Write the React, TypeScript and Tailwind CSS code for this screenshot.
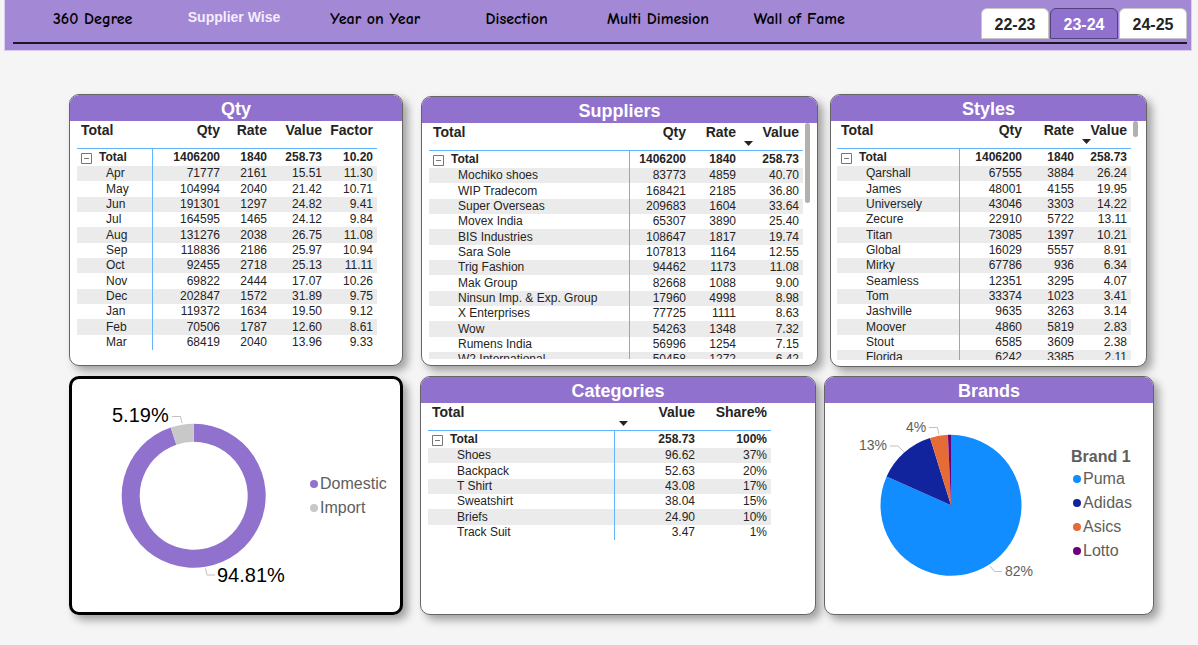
import { useState, type ReactNode } from "react";
import { clsx } from "clsx";

type Column = { label: string; width: string; sorted?: boolean };

type MatrixProps = {
  name: string;
  columns: Column[];
  total: string[];
  rows: string[][];
};

const PAGES = ["360 Degree", "Supplier Wise", "Year on Year", "Disection", "Multi Dimesion", "Wall of Fame"];
const YEARS = ["22-23", "23-24", "24-25"];

const QTY_COLUMNS: Column[] = [
  { label: "Total", width: "w-[76px]" },
  { label: "Qty", width: "w-[71px]" },
  { label: "Rate", width: "w-[47px]" },
  { label: "Value", width: "w-[55px]" },
  { label: "Factor", width: "w-[51px]" },
];

const QTY_ROWS = [
  ["Apr", "71777", "2161", "15.51", "11.30"],
  ["May", "104994", "2040", "21.42", "10.71"],
  ["Jun", "191301", "1297", "24.82", "9.41"],
  ["Jul", "164595", "1465", "24.12", "9.84"],
  ["Aug", "131276", "2038", "26.75", "11.08"],
  ["Sep", "118836", "2186", "25.97", "10.94"],
  ["Oct", "92455", "2718", "25.13", "11.11"],
  ["Nov", "69822", "2444", "17.07", "10.26"],
  ["Dec", "202847", "1572", "31.89", "9.75"],
  ["Jan", "119372", "1634", "19.50", "9.12"],
  ["Feb", "70506", "1787", "12.60", "8.61"],
  ["Mar", "68419", "2040", "13.96", "9.33"],
];

const SUPPLIER_COLUMNS: Column[] = [
  { label: "Total", width: "w-[201px]" },
  { label: "Qty", width: "w-[60px]" },
  { label: "Rate", width: "w-[50px]" },
  { label: "Value", width: "w-[63px]", sorted: true },
];

const SUPPLIER_ROWS = [
  ["Mochiko shoes", "83773", "4859", "40.70"],
  ["WIP Tradecom", "168421", "2185", "36.80"],
  ["Super Overseas", "209683", "1604", "33.64"],
  ["Movex India", "65307", "3890", "25.40"],
  ["BIS Industries", "108647", "1817", "19.74"],
  ["Sara Sole", "107813", "1164", "12.55"],
  ["Trig Fashion", "94462", "1173", "11.08"],
  ["Mak Group", "82668", "1088", "9.00"],
  ["Ninsun Imp. & Exp. Group", "17960", "4998", "8.98"],
  ["X Enterprises", "77725", "1111", "8.63"],
  ["Wow", "54263", "1348", "7.32"],
  ["Rumens India", "56996", "1254", "7.15"],
  ["W2 International", "50458", "1272", "6.42"],
];

const STYLE_COLUMNS: Column[] = [
  { label: "Total", width: "w-[123px]" },
  { label: "Qty", width: "w-[66px]" },
  { label: "Rate", width: "w-[52px]" },
  { label: "Value", width: "w-[53px]", sorted: true },
];

const STYLE_ROWS = [
  ["Qarshall", "67555", "3884", "26.24"],
  ["James", "48001", "4155", "19.95"],
  ["Universely", "43046", "3303", "14.22"],
  ["Zecure", "22910", "5722", "13.11"],
  ["Titan", "73085", "1397", "10.21"],
  ["Global", "16029", "5557", "8.91"],
  ["Mirky", "67786", "936", "6.34"],
  ["Seamless", "12351", "3295", "4.07"],
  ["Tom", "33374", "1023", "3.41"],
  ["Jashville", "9635", "3263", "3.14"],
  ["Moover", "4860", "5819", "2.83"],
  ["Stout", "6585", "3609", "2.38"],
  ["Florida", "6242", "3385", "2.11"],
];

const CATEGORY_COLUMNS: Column[] = [
  { label: "Total", width: "w-[187px]" },
  { label: "Value", width: "w-[84px]", sorted: true },
  { label: "Share%", width: "w-[72px]" },
];

const CATEGORY_ROWS = [
  ["Shoes", "96.62", "37%"],
  ["Backpack", "52.63", "20%"],
  ["T Shirt", "43.08", "17%"],
  ["Sweatshirt", "38.04", "15%"],
  ["Briefs", "24.90", "10%"],
  ["Track Suit", "3.47", "1%"],
];

const ORIGINS = [
  { label: "Domestic", share: 94.81, color: "#9071ce" },
  { label: "Import", share: 5.19, color: "#c8c8c8" },
];

const BRANDS = [
  { label: "Puma", share: 81.7, color: "#118dff" },
  { label: "Adidas", share: 13.5, color: "#12239e" },
  { label: "Asics", share: 4.1, color: "#e66c37" },
  { label: "Lotto", share: 0.7, color: "#6b007b" },
];

type Slice = { label: string; share: number; color: string };

/** Paths for pie slices, or ring slices when `inner` is above zero, clockwise from twelve o'clock. */
function slicePaths(slices: Slice[], cx: number, cy: number, outer: number, inner: number) {
  let start = 0;
  return slices.map((slice) => {
    const from = (start / 100) * 2 * Math.PI;
    start += slice.share;
    const to = (start / 100) * 2 * Math.PI;
    const large = to - from > Math.PI ? 1 : 0;
    const at = (r: number, a: number) => `${(cx + r * Math.sin(a)).toFixed(2)} ${(cy - r * Math.cos(a)).toFixed(2)}`;
    const back = inner > 0 ? `L${at(inner, to)}A${inner} ${inner} 0 ${large} 0 ${at(inner, from)}` : `L${cx} ${cy}`;
    return {
      ...slice,
      d: `M${at(outer, from)}A${outer} ${outer} 0 ${large} 1 ${at(outer, to)}${back}Z`,
    };
  });
}

function Card({ title, className, children }: { title: string; className?: string; children: ReactNode }) {
  return (
    <section
      className={clsx(
        "min-w-0 overflow-hidden rounded-[10px] border border-[#666] bg-white shadow-[5px_5px_8px_rgba(0,0,0,0.35)]",
        className,
      )}
    >
      <h2 className="h-[26px] bg-[#9071ce] text-center text-lg leading-7 font-bold text-white">{title}</h2>
      {children}
    </section>
  );
}

function Matrix({ name, columns, total, rows }: MatrixProps) {
  const [open, setOpen] = useState(true);
  return (
    <table aria-label={name} className="w-min table-fixed border-separate border-spacing-0 text-xs text-[#252423]">
      <colgroup>
        {columns.map((c) => (
          <col key={c.label} className={c.width} />
        ))}
      </colgroup>
      <thead>
        <tr className="h-7 text-sm leading-[18px]">
          {columns.map((c, i) => (
            <th
              key={c.label}
              scope="col"
              aria-sort={c.sorted ? "descending" : undefined}
              className={clsx(
                "relative border-b border-[#62b4ff] p-0 px-1 align-top font-bold",
                c.width,
                i === 0 ? "text-left" : "text-right",
              )}
            >
              {c.label}
              {c.sorted && (
                <svg className="absolute bottom-1 left-1 h-[5px] w-[9px]" viewBox="0 0 9 5" aria-hidden="true">
                  <path d="M0 0h9L4.5 5z" fill="#252423" />
                </svg>
              )}
            </th>
          ))}
        </tr>
      </thead>
      <tbody>
        <tr className="h-[17px] leading-[17px] font-bold">
          <th scope="row" className="border-r border-[#62b4ff] p-0 pl-1 text-left">
            <div className="flex h-[17px] items-center gap-[7px]">
              <button
                type="button"
                aria-label={`${open ? "Collapse" : "Expand"} ${name}`}
                onClick={() => setOpen(!open)}
                className="mt-0.5 size-[11px]"
              >
                <svg className="block size-[11px]" viewBox="0 0 11 11" fill="none" stroke="#777" aria-hidden="true">
                  <path d="M.5.5h10v10H.5zM3 5.5h5" />
                  {!open && <path d="M5.5 3v5" />}
                </svg>
              </button>
              Total
            </div>
          </th>
          {total.map((v, i) => (
            <td key={i} className="p-0 pr-1 text-right">
              {v}
            </td>
          ))}
        </tr>
        {open &&
          rows.map(([label, ...values], r) => (
            <tr
              key={label}
              className={clsx(
                "leading-[15px] whitespace-nowrap",
                r % 3 === 1 ? "h-4" : "h-[15px]",
                r % 2 === 0 && "bg-[#ebebeb]",
              )}
            >
              <th scope="row" className="border-r border-[#62b4ff] p-0 pl-[29px] text-left font-normal">
                {label}
              </th>
              {values.map((v, i) => (
                <td key={i} className="p-0 pr-1 text-right">
                  {v}
                </td>
              ))}
            </tr>
          ))}
      </tbody>
    </table>
  );
}

function Legend({ items }: { items: Slice[] }) {
  return (
    <ul>
      {items.map((item) => (
        <li key={item.label} className="flex items-center gap-0.5 text-base leading-6 text-[#605e5c]">
          <svg className="size-2" viewBox="0 0 8 8" aria-hidden="true">
            <circle cx="4" cy="4" r="4" fill={item.color} />
          </svg>
          {item.label}
        </li>
      ))}
    </ul>
  );
}

export default function App() {
  const [page, setPage] = useState("Supplier Wise");
  const [year, setYear] = useState("23-24");

  return (
    <div className="min-h-screen bg-[#f5f5f5] pb-7 font-['Liberation_Sans',Arial,sans-serif]">
      <header className="mr-[6px] ml-1 border border-t-0 border-[#d9ceee] bg-[#a288d5] pt-2 pr-1 pb-1.5 pl-2">
        <div className="flex items-start border-b-2 border-[#1c1626] pb-[3px]">
          <nav className="mr-[111px] ml-[9px] grid flex-1 grid-cols-6 text-center">
            {PAGES.map((p) => (
              <a
                key={p}
                href="#"
                aria-current={p === page ? "page" : undefined}
                onClick={() => setPage(p)}
                className={clsx(
                  "whitespace-nowrap",
                  p === page
                    ? "text-sm leading-[18px] font-bold text-[#f3edfc]"
                    : "font-['Comic_Sans_MS','Comic_Neue','Open_Sans',sans-serif] text-base leading-[22px] font-bold text-black",
                )}
              >
                {p}
              </a>
            ))}
          </nav>
          <div className="flex gap-px">
            {YEARS.map((y) => (
              <button
                key={y}
                type="button"
                aria-pressed={y === year}
                onClick={() => setYear(y)}
                className={clsx(
                  "h-[31px] w-[68px] rounded-t-md border pt-0.5 text-base leading-6 font-bold",
                  y === year ? "border-[#54427a] bg-[#9071ce] text-white" : "border-[#c8c6c4] bg-white text-[#252423]",
                )}
              >
                {y}
              </button>
            ))}
          </div>
        </div>
      </header>

      <main className="flex flex-col gap-[9px] pt-[43px] pl-[69px]">
        <div className="grid grid-cols-[352fr_409fr_317fr] items-start pr-[51px]">
          <Card title="Qty" className="mr-[18px]">
            <div className="pb-[15px] pl-[7px]">
              <Matrix
                name="Qty"
                columns={QTY_COLUMNS}
                total={["1406200", "1840", "258.73", "10.20"]}
                rows={QTY_ROWS}
              />
            </div>
          </Card>
          <Card title="Suppliers" className="mt-0.5 mr-3">
            <div className="flex gap-0.5 pb-1.5 pl-[7px]">
              <div className="h-[236px] overflow-hidden">
                <Matrix
                  name="Suppliers"
                  columns={SUPPLIER_COLUMNS}
                  total={["1406200", "1840", "258.73"]}
                  rows={SUPPLIER_ROWS}
                />
              </div>
              <div className="h-20 w-[5px] rounded-full bg-[#b3b0ad]" />
            </div>
          </Card>
          <Card title="Styles">
            <div className="flex gap-0.5 pb-1.5 pl-1.5">
              <div className="h-[239px] overflow-hidden">
                <Matrix
                  name="Styles"
                  columns={STYLE_COLUMNS}
                  total={["1406200", "1840", "258.73"]}
                  rows={STYLE_ROWS}
                />
              </div>
              <div className="h-4 w-[5px] rounded-full bg-[#b3b0ad]" />
            </div>
          </Card>
        </div>

        <div className="grid grid-cols-[351fr_404fr_330fr] pr-11">
          <section
            aria-label="Domestic and import share"
            className="mr-[17px] flex min-w-0 items-center rounded-[10px] border-3 border-black bg-white shadow-[5px_5px_8px_rgba(0,0,0,0.35)]"
          >
            <svg className="mr-1 h-[233px] w-[234px] shrink-0" viewBox="72 379 234 233" role="img" aria-label="Share by origin">
              {slicePaths(ORIGINS, 193.7, 495.8, 72, 54).map((s) => (
                <path key={s.label} d={s.d} fill={s.color} />
              ))}
              <g fill="none" stroke="#c0c0c0">
                <path d="M172 416.5h8.500l1.500 6.500" />
                <path d="M205.500 568.500l1.500 6.500h8" />
              </g>
              <g fontSize="20" fill="#000">
                <text x="112" y="422">5.19%</text>
                <text x="217" y="582">94.81%</text>
              </g>
            </svg>
            <Legend items={ORIGINS} />
          </section>
          <Card title="Categories" className="mr-2">
            <div className="pl-[7px]">
              <Matrix name="Categories" columns={CATEGORY_COLUMNS} total={["258.73", "100%"]} rows={CATEGORY_ROWS} />
            </div>
          </Card>
          <Card title="Brands">
            <div className="flex items-start">
              <svg className="h-[211px] w-[240px] shrink-0" viewBox="825 403 240 211" role="img" aria-label="Share by brand">
                {slicePaths(BRANDS, 951, 505.3, 70.5, 0).map((s) => (
                  <path key={s.label} d={s.d} fill={s.color} />
                ))}
                <g fill="none" stroke="#c0c0c0">
                  <path d="M929 427.500h8.500l1.500 7" />
                  <path d="M890 446h8l6 6" />
                  <path d="M990 566l4.500 5.500h7.500" />
                </g>
                <g fontSize="14" fill="#605e5c">
                  <text x="906" y="432">4%</text>
                  <text x="859" y="450">13%</text>
                  <text x="1005" y="576">82%</text>
                </g>
              </svg>
              <div className="mt-11 ml-1.5">
                <h3 className="text-base leading-5 font-bold whitespace-nowrap text-[#605e5c]">Brand 1</h3>
                <div className="pl-0.5">
                  <Legend items={BRANDS} />
                </div>
              </div>
            </div>
          </Card>
        </div>
      </main>
    </div>
  );
}
